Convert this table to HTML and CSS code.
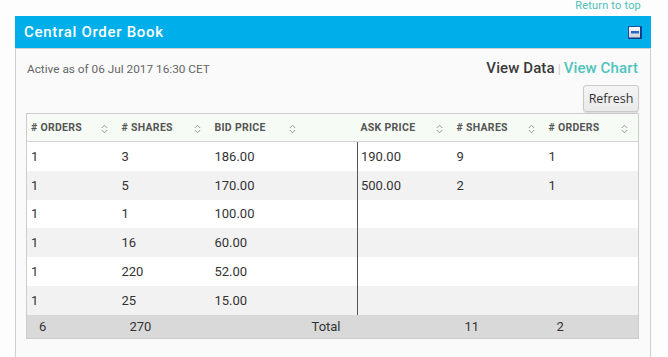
FILE: index.html
```html
<!DOCTYPE html>
<html>
<head>
<meta charset="utf-8">
<link rel="stylesheet" href="styles.css">
</head>
<body>
<div class="top"><a class="rtt">Return to top</a></div>
<div class="widget">
  <div class="wh">
    <span class="wt">Central Order Book</span>
    <svg class="minbtn" width="14" height="13" viewBox="0 0 14 13">
      <defs><linearGradient id="g" x1="0" y1="0" x2="0" y2="1"><stop offset="0" stop-color="#ffffff"/><stop offset="1" stop-color="#c9ccd2"/></linearGradient></defs>
      <rect x="0.5" y="0.5" width="13" height="12" fill="url(#g)" stroke="#1c4fa0"/>
      <rect x="12" y="1" width="1.5" height="11.5" fill="#0f3c87"/>
      <rect x="1" y="11.5" width="12.5" height="1.5" fill="#0f3c87"/>
      <rect x="3" y="5" width="8" height="2.5" fill="#2a64c4"/>
    </svg>
  </div>
  <div class="wb">
    <div class="bar">
      <span class="asof">Active as of 06 Jul 2017 16:30 CET</span>
      <span class="views"><span class="vd">View Data</span><span class="sep">|</span><a class="vc">View Chart</a></span>
    </div>
    <div class="tools"><button class="refresh">Refresh</button></div>
    <table class="ob">
      <colgroup>
        <col class="c1"><col class="c2"><col class="c3"><col class="cs"><col class="c4"><col class="c5"><col class="c6">
      </colgroup>
      <thead>
        <tr>
          <th><span>#&nbsp;ORDERS</span><i class="si"></i></th>
          <th><span># SHARES</span><i class="si"></i></th>
          <th><span>BID PRICE</span><i class="si"></i></th>
          <th></th>
          <th class="ap"><span>ASK PRICE</span><i class="si"></i></th>
          <th><span># SHARES</span><i class="si"></i></th>
          <th><span># ORDERS</span><i class="si"></i></th>
        </tr>
      </thead>
      <tbody>
        <tr><td>1</td><td>3</td><td>186.00</td><td></td><td class="ask">190.00</td><td>9</td><td>1</td></tr>
        <tr class="alt"><td>1</td><td>5</td><td>170.00</td><td></td><td class="ask">500.00</td><td>2</td><td>1</td></tr>
        <tr><td>1</td><td>1</td><td>100.00</td><td></td><td class="ask"></td><td></td><td></td></tr>
        <tr class="alt"><td>1</td><td>16</td><td>60.00</td><td></td><td class="ask"></td><td></td><td></td></tr>
        <tr><td>1</td><td>220</td><td>52.00</td><td></td><td class="ask"></td><td></td><td></td></tr>
        <tr class="alt"><td>1</td><td>25</td><td>15.00</td><td></td><td class="ask"></td><td></td><td></td></tr>
      </tbody>
      <tfoot>
        <tr><td>6</td><td>270</td><td></td><td class="tot">Total</td><td></td><td>11</td><td>2</td></tr>
      </tfoot>
    </table>
  </div>
</div>
</body>
</html>
```

FILE: styles.css
```css
html, body {
  margin: 0;
  padding: 0;
  background: #fdfdfd;
  font-family: Roboto, "Liberation Sans", sans-serif;
}
.top {
  height: 16px;
  display: flex;
  justify-content: flex-end;
  align-items: flex-start;
  padding-right: 27px;
}
.rtt {
  display: block;
  font-size: 11px;
  line-height: 11px;
  color: #4dbfb7;
  letter-spacing: 0.2px;
}
.widget {
  margin-left: 15px;
  width: 636px;
}
.wh {
  height: 32px;
  background: #00afea;
  display: flex;
  align-items: center;
  justify-content: space-between;
  padding: 0 9px 0 9px;
}
.wt {
  color: #fff;
  font-size: 15px;
  font-weight: 500;
  letter-spacing: 0.7px;
}
.minbtn {
  display: block;
  margin-top: 1px;
}
.wb {
  border: 1px solid #cfcfcf;
  border-bottom: none;
  background: #fafafa;
  padding: 0 11px 20px 10px;
  height: 288px;
}
.bar {
  display: flex;
  justify-content: space-between;
  align-items: flex-end;
  height: 27px;
  margin-top: 1px;
}
.asof {
  font-size: 11.8px;
  color: #666;
  padding-left: 1px;
  margin-bottom: 1px;
}
.views {
  font-size: 15px;
  font-weight: 500;
  margin-right: 1px;
  letter-spacing: 0.1px;
}
.vd { color: #3a3a3a; }
.sep { color: #ccc; font-size: 12px; margin: 0 3px 0 3px; }
.vc { color: #4ec4bb; }
.tools {
  display: flex;
  justify-content: flex-end;
  padding-top: 8px;
  height: 28px;
}
.refresh {
  height: 27px;
  width: 56px;
  border: 1px solid #c9c9c9;
  border-radius: 3px;
  background: linear-gradient(#f5f5f5, #e9e9e9);
  box-shadow: 0 1px 1px rgba(0,0,0,0.12);
  font-family: "Open Sans", "Noto Sans", sans-serif;
  font-size: 12.5px;
  color: #333;
  padding: 0;
}
.ob {
  width: 612px;
  border-collapse: collapse;
  table-layout: fixed;
  border: 1px solid #cccccc;
  font-size: 13px;
  color: #333;
}
.c1 { width: 91px; }
.c2 { width: 93px; }
.c3 { width: 95px; }
.cs { width: 52px; }
.c4 { width: 95px; }
.c5 { width: 92px; }
.c6 { width: 94px; }
.ob th {
  height: 27px;
  background: #f6fcf5;
  border-bottom: 1px solid #d4d4d4;
  font-size: 10.5px;
  font-weight: 700;
  color: #555;
  text-align: left;
  padding: 0 0 0 4px;
  position: relative;
  letter-spacing: 0.3px;
}
.ob th.ap { padding-left: 3px; }
.si {
  position: absolute;
  right: 10px;
  top: 10px;
  width: 7px;
  height: 10px;
  background:
    no-repeat center/7px 10px url("data:image/svg+xml,%3Csvg xmlns='http://www.w3.org/2000/svg' width='7' height='10' viewBox='0 0 7 10'%3E%3Cpath d='M0.8 4 L3.5 1.2 L6.2 4 M0.8 6 L3.5 8.8 L6.2 6' fill='none' stroke='%23999' stroke-width='1'/%3E%3C/svg%3E");
}
.ob tbody td {
  height: 28.8px;
  padding: 0 0 0 4px;
  text-align: left;
  background: #ffffff;
}
.ob td.ask {
  border-left: 1px solid #555;
  padding-left: 3px;
}
.ob tbody tr.alt td { background: #f2f2f2; }
.ob tfoot td {
  height: 23px;
  background: #d9d9d9;
  padding: 0 0 0 12px;
}
.ob tfoot td.tot { padding-left: 6px; }
```
